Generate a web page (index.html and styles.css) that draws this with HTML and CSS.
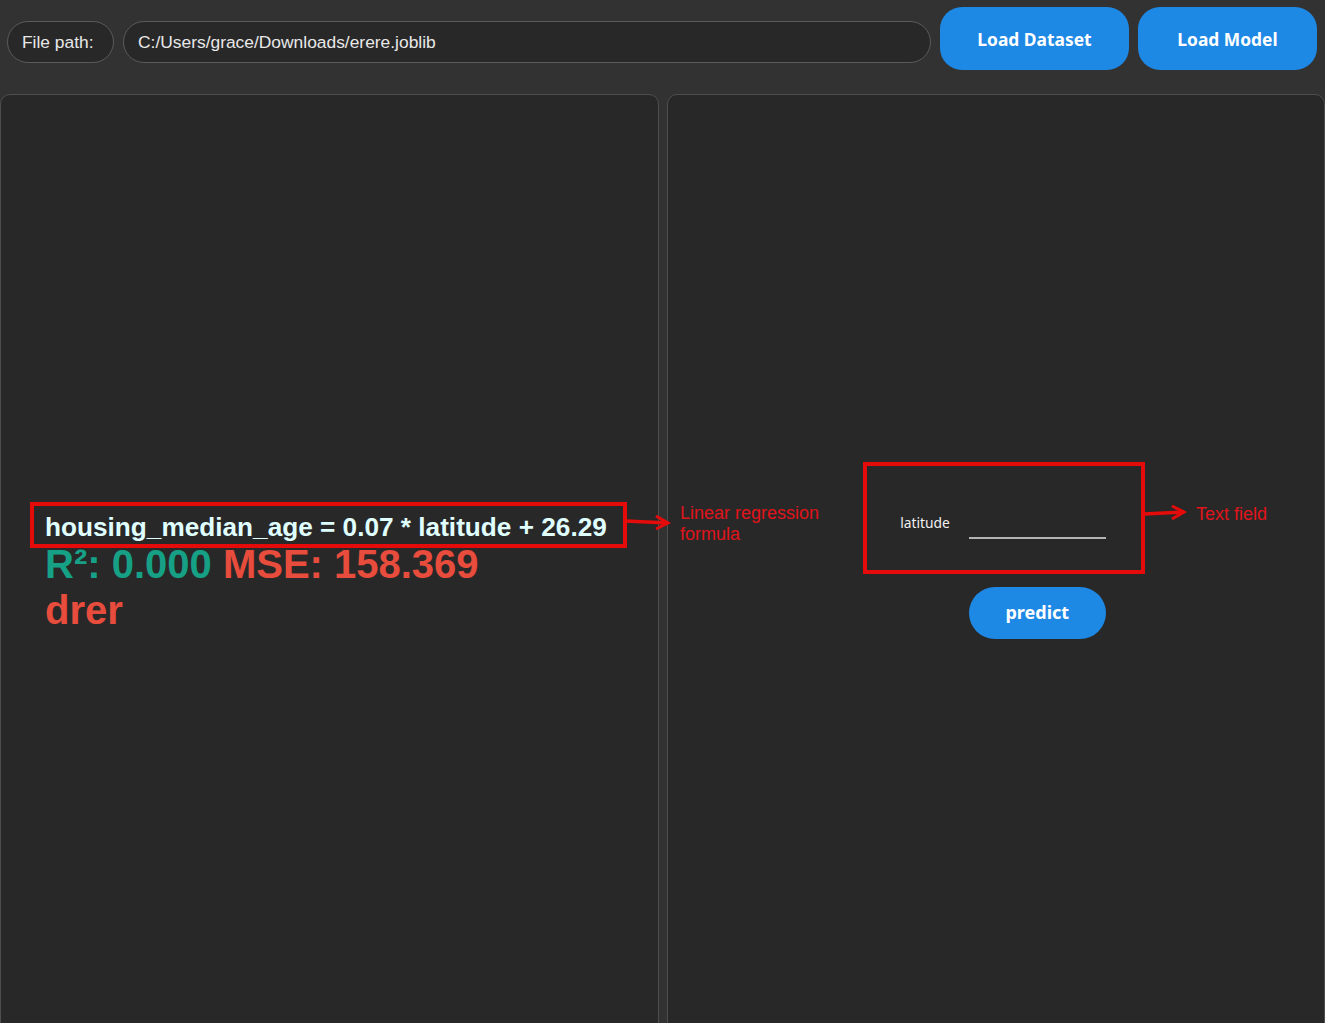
FILE: index.html
```html
<!DOCTYPE html>
<html>
<head>
<meta charset="utf-8">
<link rel="stylesheet" href="styles.css">
</head>
<body>
<div class="page">
  <header class="topbar">
    <div class="pill label">File path:</div>
    <div class="pill path">C:/Users/grace/Downloads/erere.joblib</div>
    <button class="btn btn-dataset">Load Dataset</button>
    <button class="btn btn-model">Load Model</button>
  </header>
  <main class="panels">
    <section class="panel left">
      <div class="results">
        <div class="formula">housing_median_age = 0.07 * latitude + 26.29</div>
        <div class="metrics"><span class="r2">R²: 0.000</span> <span class="mse">MSE: 158.369</span></div>
        <div class="extra">drer</div>
      </div>
    </section>
    <section class="panel right">
      <div class="form">
        <span class="field-label">latitude</span>
        <span class="field-input"></span>
        <button class="predict">predict</button>
      </div>
    </section>
  </main>

  <div class="anno box-formula"></div>
  <svg class="anno arrow arrow-1" width="50" height="20" viewBox="0 0 50 20">
    <path d="M0 9 L42 11" stroke="#e60b0b" stroke-width="3.5" fill="none"/>
    <path d="M30 4 L42 11 L30 17" stroke="#e60b0b" stroke-width="3" fill="none"/>
  </svg>
  <div class="anno note note-formula">Linear regression<br>formula</div>

  <div class="anno box-field"></div>
  <svg class="anno arrow arrow-2" width="50" height="20" viewBox="0 0 50 20">
    <path d="M0 11 L40 9" stroke="#e60b0b" stroke-width="3.5" fill="none"/>
    <path d="M28 3 L40 9 L28 16" stroke="#e60b0b" stroke-width="3" fill="none"/>
  </svg>
  <div class="anno note note-field">Text field</div>
</div>
</body>
</html>
```

FILE: styles.css
```css
html, body {
  margin: 0;
  padding: 0;
  background: #323232;
  overflow: hidden;
}

.page {
  position: relative;
  width: 1325px;
  height: 1023px;
  overflow: hidden;
}

.topbar {
  display: flex;
  align-items: flex-start;
  gap: 9px;
  padding: 7px 8px 0 7px;
  height: 87px;
}

.pill {
  box-sizing: border-box;
  height: 42px;
  margin-top: 14px;
  border: 1px solid #5a5a5a;
  border-radius: 21px;
  background: #282828;
  color: #e8e8e8;
  font-family: "Liberation Sans", Arial, sans-serif;
  font-size: 17.4px;
  display: flex;
  align-items: center;
}

.pill.label {
  width: 107px;
  flex: none;
  padding-left: 14px;
}

.pill.path {
  flex: 1;
  padding-left: 14px;
}

.btn {
  box-sizing: border-box;
  flex: none;
  height: 63px;
  border: none;
  border-radius: 22px;
  background: #1e88e5;
  color: #ffffff;
  font-family: "Noto Sans", "Open Sans", sans-serif;
  font-weight: 700;
  font-size: 17.4px;
  padding: 0;
}

.btn-dataset { width: 189px; }
.btn-model { width: 179px; }

.panels {
  display: grid;
  grid-template-columns: 659px 658px;
  gap: 8px;
}

.panel {
  box-sizing: border-box;
  height: 946px;
  background: #282828;
  border: 1px solid #4e4e4e;
  border-radius: 10px;
  display: flex;
  flex-direction: column;
  justify-content: center;
}

.results {
  padding-left: 44px;
  padding-top: 12px;
  font-family: "Liberation Sans", Arial, sans-serif;
  font-weight: 700;
}

.formula {
  color: #e0ffff;
  font-size: 26.2px;
  line-height: 28px;
}

.metrics, .extra {
  font-size: 40px;
  line-height: 46px;
}

.r2 { color: #16a085; }
.mse, .extra { color: #e74c3c; }

.form {
  align-self: center;
  margin-left: 14px;
  margin-top: 13px;
  display: grid;
  grid-template-columns: auto 137px;
  column-gap: 19px;
  row-gap: 48px;
  align-items: end;
}

.field-label {
  color: #f0f0f0;
  font-family: "Noto Sans", "Open Sans", sans-serif;
  font-size: 13.8px;
  line-height: 20px;
  padding-bottom: 6px;
}

.field-input {
  display: block;
  height: 28px;
  border-bottom: 2px solid #b4b4b4;
}

.predict {
  grid-column: 2;
  height: 52px;
  border: none;
  border-radius: 26px;
  background: #1e88e5;
  color: #ffffff;
  font-family: "Noto Sans", "Open Sans", sans-serif;
  font-weight: 700;
  font-size: 18px;
  padding: 0 0 2px;
}

/* annotations overlaid on the screenshot */
.anno { position: absolute; }

.box-formula {
  left: 30px;
  top: 502px;
  width: 589px;
  height: 38px;
  border: 4px solid #e60b0b;
}

.box-field {
  left: 863px;
  top: 462px;
  width: 274px;
  height: 104px;
  border: 4px solid #e60b0b;
}

.arrow-1 { left: 626px; top: 512px; }
.arrow-2 { left: 1144px; top: 503px; }

.note {
  color: #e0141b;
  font-family: "Liberation Sans", Arial, sans-serif;
  font-size: 18px;
  line-height: 21px;
}

.note-formula { left: 680px; top: 503px; }
.note-field { left: 1196px; top: 504px; }
```
